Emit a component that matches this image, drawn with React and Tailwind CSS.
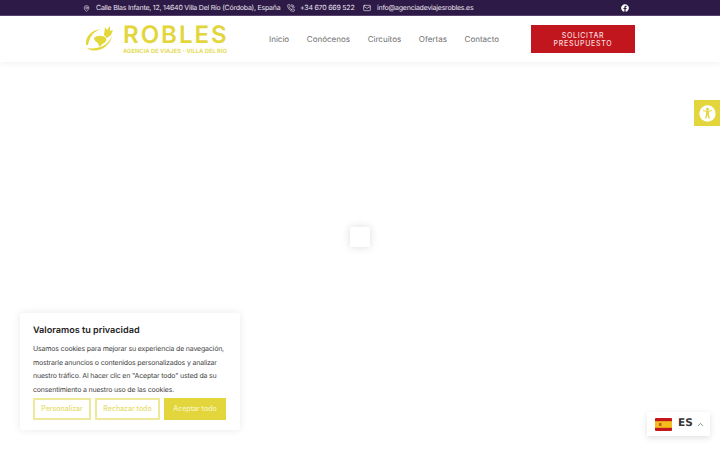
import React from 'react';
import { Mail, MapPin, PhoneCall, ChevronUp } from 'lucide-react';
import { FaFacebook } from 'react-icons/fa';

const font = { fontFamily: 'Inter, "Liberation Sans", sans-serif' };

const Logo = () => (
  <div className="flex items-start w-[146px] h-[32px]">
    <svg width="30" height="28" viewBox="0 0 30 28" fill="none" className="shrink-0 mt-[2px] ml-[1px]">
      <path d="M3 20C2 12 8 5 18 4c-6 2-11 6-13 16z" fill="#e4d73a" />
      <path d="M4 23c5 4 13 3 18-1 4-3 6-7 7-11-2 4-5 8-9 10-5 2-10 3-16 2z" fill="#e4d73a" />
      <path d="M11 13c3-3 9-3 12 0 1 2 0 4-2 5-2 1-3 2-4 4-1-1-2-3-2-4-2-1-4-3-4-5z" fill="#e4d73a" />
      <path d="M21 10l1-8 2 3 3-4 0 5 3-1-2 5-4 3z" fill="#e4d73a" />
    </svg>
    <div className="ml-[10px] flex flex-col items-start">
      <span className="text-[24px] leading-[24px] h-[24px] font-semibold tracking-[2px] text-[#e2d63c] whitespace-nowrap">ROBLES</span>
      <span className="text-[5.8px] leading-[7px] mt-[1px] font-bold text-[#e6dc5c] whitespace-nowrap">AGENCIA DE VIAJES - VILLA DEL RÍO</span>
    </div>
  </div>
);

const TopBar = () => (
  <div className="h-[16px] bg-[#2e1a47] border-b border-[#5a4470] flex items-center pl-[83px] pt-[1px] text-[7px] tracking-[-0.22px] text-[#e9e4ee] whitespace-nowrap">
    <MapPin size={7} className="mr-[6px]" />
    <span className="w-[191px]">Calle Blas Infante, 12, 14640 Villa Del Río (Córdoba), España</span>
    <PhoneCall size={8} className="mr-[5px]" />
    <span className="w-[63px]">+34 670 669 522</span>
    <Mail size={8} className="mr-[6px]" />
    <span className="w-[244px]">info@agenciadeviajesrobles.es</span>
    <FaFacebook size={8} className="text-white" />
  </div>
);

const Header = () => (
  <div className="h-[46px] bg-white flex items-center pl-[82px] shadow-[0_2px_6px_rgba(0,0,0,0.05)]">
    <Logo />
    <nav className="ml-[41px] w-[230px] flex justify-between text-[8px] text-[#6f6f6f] whitespace-nowrap">
      <span>Inicio</span>
      <span>Conócenos</span>
      <span>Circuitos</span>
      <span>Ofertas</span>
      <span>Contacto</span>
    </nav>
    <button className="ml-[32px] w-[104px] h-[28px] pt-[1px] bg-[#c2161f] text-[#f7dcdc] text-[7px] leading-[8px] font-medium tracking-[0.7px]">
      SOLICITAR<br />PRESUPUESTO
    </button>
  </div>
);

const CookieBox = () => (
  <div className="absolute left-[20px] top-[313px] w-[220px] h-[117px] bg-white rounded-[3px] shadow-[0_0_8px_rgba(0,0,0,0.09)] px-[13px] pt-[12px]">
    <h2 className="text-[9.1px] leading-[12px] font-semibold text-[#222]">Valoramos tu privacidad</h2>
    <p className="mt-[5px] text-[7px] leading-[13.5px] tracking-[-0.18px] text-[#444] whitespace-nowrap">
      Usamos cookies para mejorar su experiencia de navegación,<br />
      mostrarle anuncios o contenidos personalizados y analizar<br />
      nuestro tráfico. Al hacer clic en "Aceptar todo" usted da su<br />
      consentimiento a nuestro uso de las cookies.
    </p>
    <div className="mt-[2px] flex gap-[4px] text-[7px] font-medium">
      <button className="w-[58px] h-[22px] border-2 border-[#eee89a] text-[#e6dc6a]">Personalizar</button>
      <button className="w-[65px] h-[22px] border-2 border-[#eee89a] text-[#e6dc6a]">Rechazar todo</button>
      <button className="w-[62px] h-[22px] bg-[#e2d63c] text-[#f8f4c0]">Aceptar todo</button>
    </div>
  </div>
);

const Accessibility = () => (
  <div className="absolute right-0 top-[100px] w-[26px] h-[26px] bg-[#e2d63c] flex items-center justify-center">
    <svg width="17" height="17" viewBox="0 0 24 24">
      <circle cx="12" cy="12" r="11.500" fill="#fff" />
      <circle cx="12" cy="6" r="2" fill="#e2d63c" />
      <path d="M5.500 8.500l4.500 1.200v3.300L8.500 19h1.800l1.700-5 1.700 5h1.800L14 13V9.700l4.500-1.200-.4-1.500-4.100 1.100h-4L5.900 7z" fill="#e2d63c" />
    </svg>
  </div>
);

const LanguageSwitch = () => (
  <div className="absolute left-[647px] top-[412px] w-[63px] h-[24px] bg-white shadow-[0_2px_6px_rgba(0,0,0,0.12)] flex items-center pl-[8px]">
    <svg width="17" height="13" viewBox="0 0 17 13" className="shrink-0">
      <rect width="17" height="13" rx="1" fill="#c4161c" />
      <rect y="3.200" width="17" height="6.600" fill="#f4bd1c" />
      <rect x="4" y="5" width="2.500" height="3" fill="#c05a20" />
    </svg>
    <span className="ml-[6px] text-[10.500px] font-bold text-[#333]" style={{ fontFamily: '"DejaVu Sans", sans-serif' }}>ES</span>
    <ChevronUp size={9} className="ml-[3px] text-[#666]" />
  </div>
);

const App = () => {
  return (
    <div className="relative w-[720px] h-[450px] overflow-hidden bg-white [text-rendering:geometricPrecision]" style={font}>
      <TopBar />
      <Header />
      <div className="h-[388px] flex items-center justify-center">
        <div className="w-[20px] h-[20px] mb-[38px] bg-white rounded-[1px] shadow-[0_0_8px_rgba(0,0,0,0.14)]" />
      </div>
      <Accessibility />
      <CookieBox />
      <LanguageSwitch />
    </div>
  );
};

export default App;
